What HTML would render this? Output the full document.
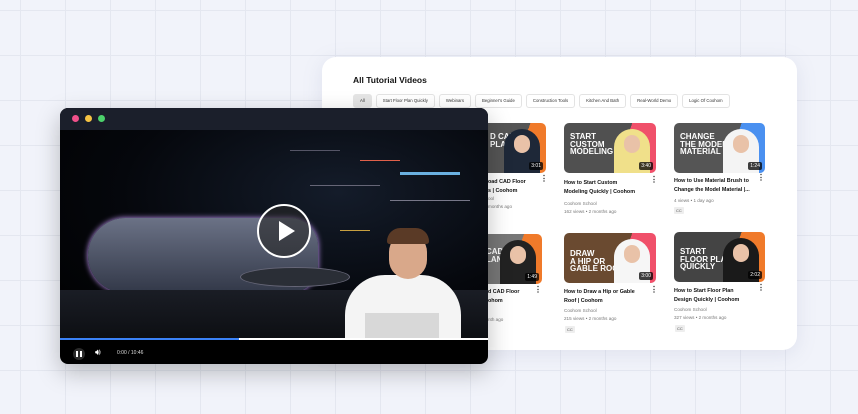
<!DOCTYPE html>
<html><head><meta charset="utf-8"><style>
*{margin:0;padding:0;box-sizing:border-box}
body{width:858px;height:414px;overflow:hidden;font-family:"Liberation Sans",sans-serif;background:#f1f3fa;position:relative;
background-image:linear-gradient(#e4e7f0 1px,transparent 1px),linear-gradient(90deg,#e4e7f0 1px,transparent 1px);background-size:45px 45px;background-position:20px 10px}
.card{position:absolute;left:322px;top:57px;width:475px;height:293px;background:#fff;border-radius:14px;box-shadow:0 4px 20px rgba(120,130,170,.15)}
h1{position:absolute;left:353px;top:75px;font-size:8.5px;font-weight:bold;color:#111}
.chips{position:absolute;left:353px;top:94px;display:flex;gap:4px}
.chip{height:14px;border:1px solid #e3e3e3;border-radius:3px;font-size:4.3px;color:#333;padding:0 6px;line-height:12px;background:#fff}
.chip.a{background:#e5e5e5;border-color:#e5e5e5}
.th{position:absolute;border-radius:5px;overflow:hidden}
.th b{position:absolute;left:6px;top:10px;color:#fff;font-size:8px;line-height:7.5px;font-weight:bold}
.dur{position:absolute;right:3px;bottom:3px;background:rgba(0,0,0,.75);color:#fff;font-size:5px;padding:1px 2px;border-radius:2px}
.face{position:absolute;right:6px;bottom:0;width:36px;height:44px;border-radius:18px 18px 0 0;background:#3a2a22}
.face i{position:absolute;left:10px;top:6px;width:16px;height:18px;border-radius:8px;background:#e9c2a8}
.t{position:absolute;font-size:5.4px;font-weight:bold;color:#111;line-height:8.5px;width:86px}
.m{position:absolute;font-size:4.6px;color:#777;line-height:8px}
.cc{position:absolute;font-size:4px;color:#555;background:#eee;padding:1px 2px;border-radius:1px}
.dots{position:absolute;font-size:8px;color:#222;font-weight:bold;line-height:3px;width:3px}
.pl{position:absolute;left:60px;top:108px;width:428px;height:256px;border-radius:8px;overflow:hidden;background:#000;box-shadow:0 8px 24px rgba(0,0,0,.25)}
.bar{height:22px;background:#1b1f2b;position:relative}
.bar span{position:absolute;top:7px;width:7px;height:7px;border-radius:50%}
.vid{position:absolute;top:22px;left:0;width:428px;height:208px;background:radial-gradient(ellipse at 65% 30%,#141c2a 0%,#05070c 55%,#000 100%)}
.sp{position:absolute;height:1px}
</style></head><body>
<div class="card"></div>
<h1>All Tutorial Videos</h1>
<div class="chips"><div class="chip a">All</div><div class="chip">Start Floor Plan Quickly</div><div class="chip">Webinars</div><div class="chip">Beginner's Guide</div><div class="chip">Construction Tools</div><div class="chip">Kitchen And Bath</div><div class="chip">Real-World Demo</div><div class="chip">Logic Of Coohom</div></div>

<div class="th" style="left:480px;top:123px;width:66px;height:50px;background:linear-gradient(110deg,#555 60%,#f07a2a 60%)"><b style="left:10px">D CAD<br>PLAN</b><div class="face" style="background:#1e2838"><i></i></div><div class="dur">3:01</div></div>
<div class="th" style="left:564px;top:123px;width:92px;height:50px;background:linear-gradient(110deg,#505050 62%,#f0506a 62%)"><b>START<br>CUSTOM<br>MODELING</b><div class="face" style="background:#f0e08a"><i></i></div><div class="dur">3:40</div></div>
<div class="th" style="left:674px;top:123px;width:91px;height:50px;background:linear-gradient(110deg,#555 62%,#4a90f0 62%)"><b>CHANGE<br>THE MODEL<br>MATERIAL</b><div class="face" style="background:#f4f4f4"><i></i></div><div class="dur">1:24</div></div>

<div class="t" style="left:488px;top:178px">oad CAD Floor<br>s | Coohom</div><div class="dots" style="left:540px;top:177px">⋮</div>
<div class="m" style="left:488px;top:195px">ool<br>months ago</div>
<div class="t" style="left:564px;top:179px">How to Start Custom<br>Modeling Quickly | Coohom</div><div class="dots" style="left:650px;top:178px">⋮</div>
<div class="m" style="left:564px;top:200px">Coohom School<br>162 views • 2 months ago</div>
<div class="t" style="left:674px;top:177px">How to Use Material Brush to<br>Change the Model Material |...</div><div class="dots" style="left:757px;top:176px">⋮</div>
<div class="m" style="left:674px;top:197px">4 views • 1 day ago</div><div class="cc" style="left:674px;top:207px">CC</div>

<div class="th" style="left:480px;top:234px;width:62px;height:50px;background:linear-gradient(110deg,#777 55%,#f07a2a 55%)"><b style="left:6px;top:14px">CAD<br>LAN</b><div class="face" style="background:#222"><i></i></div><div class="dur">1:49</div></div>
<div class="th" style="left:564px;top:233px;width:92px;height:50px;background:linear-gradient(110deg,#6a4a30 62%,#f0506a 62%)"><b style="top:17px">DRAW<br>A HIP OR<br>GABLE ROOF</b><div class="face" style="background:#f6f6f6"><i></i></div><div class="dur">3:00</div></div>
<div class="th" style="left:674px;top:232px;width:91px;height:50px;background:linear-gradient(110deg,#444 62%,#f07a2a 62%)"><b style="top:16px">START<br>FLOOR PLAN<br>QUICKLY</b><div class="face" style="background:#1a1a1a"><i></i></div><div class="dur">2:02</div></div>

<div class="t" style="left:488px;top:288px">d CAD Floor<br>ohom</div><div class="dots" style="left:534px;top:288px">⋮</div>
<div class="m" style="left:488px;top:316px">nth ago</div>
<div class="t" style="left:564px;top:288px">How to Draw a Hip or Gable<br>Roof | Coohom</div><div class="dots" style="left:650px;top:288px">⋮</div>
<div class="m" style="left:564px;top:307px">Coohom School<br>215 views • 2 months ago</div><div class="cc" style="left:565px;top:326px">CC</div>
<div class="t" style="left:674px;top:287px">How to Start Floor Plan<br>Design Quickly | Coohom</div><div class="dots" style="left:757px;top:286px">⋮</div>
<div class="m" style="left:674px;top:306px">Coohom School<br>327 views • 2 months ago</div><div class="cc" style="left:675px;top:325px">CC</div>

<div class="pl">
<div class="bar"><span style="left:12px;background:#f0508a"></span><span style="left:25px;background:#f6c343"></span><span style="left:38px;background:#4cd16b"></span></div>
<div class="vid">
<div class="sp" style="left:300px;top:30px;width:40px;background:#e0604a"></div>
<div class="sp" style="left:340px;top:42px;width:60px;height:3px;background:#6ab0e0"></div>
<div class="sp" style="left:250px;top:55px;width:70px;background:#667"></div>
<div class="sp" style="left:230px;top:20px;width:50px;background:#556"></div>
<div class="sp" style="left:330px;top:70px;width:80px;background:#778"></div>
<div class="sp" style="left:280px;top:100px;width:30px;background:#c8a040"></div>
<div style="position:absolute;left:28px;top:88px;width:230px;height:75px;border-radius:40px 30px 30px 40px;background:linear-gradient(#6b7286,#323848);box-shadow:0 0 6px #c89cff"></div>
<div style="position:absolute;left:180px;top:137px;width:110px;height:20px;border-radius:50%;background:#2a2e36;border:1px solid #667"></div>
<div style="position:absolute;left:0;top:160px;width:428px;height:48px;background:linear-gradient(#1a1d25,#0d0f13)"></div>
<div style="position:absolute;left:197px;top:74px;width:54px;height:54px;border-radius:50%;border:2px solid #fff;background:rgba(40,40,40,.6)"><div style="position:absolute;left:20px;top:15px;border-left:16px solid #fff;border-top:10px solid transparent;border-bottom:10px solid transparent"></div></div>
<div style="position:absolute;left:285px;top:145px;width:116px;height:63px;border-radius:40px 40px 0 0;background:#f4f4f4"></div>
<div style="position:absolute;left:329px;top:103px;width:38px;height:46px;border-radius:19px;background:#d9a88a"></div>
<div style="position:absolute;left:327px;top:98px;width:42px;height:16px;border-radius:20px 20px 4px 4px;background:#5a3a26"></div>
<div style="position:absolute;left:305px;top:183px;width:74px;height:25px;background:#d8d8d8"></div>
</div>
<div style="position:absolute;top:230px;left:0;width:428px;height:2px;background:#fff"><div style="width:179px;height:2px;background:#3b82f6"></div></div>
<div style="position:absolute;top:240px;left:13px;width:12px;height:12px;border-radius:50%;background:#2a2a2a"><div style="position:absolute;left:3px;top:3px;width:2px;height:6px;background:#fff"></div><div style="position:absolute;left:7px;top:3px;width:2px;height:6px;background:#fff"></div></div>
<div style="position:absolute;top:239px;left:35px;color:#fff;font-size:9px">🔊︎</div>
<div style="position:absolute;top:242px;left:57px;color:#ddd;font-size:5px">0:00 / 10:46</div>
</div>
</body></html>
